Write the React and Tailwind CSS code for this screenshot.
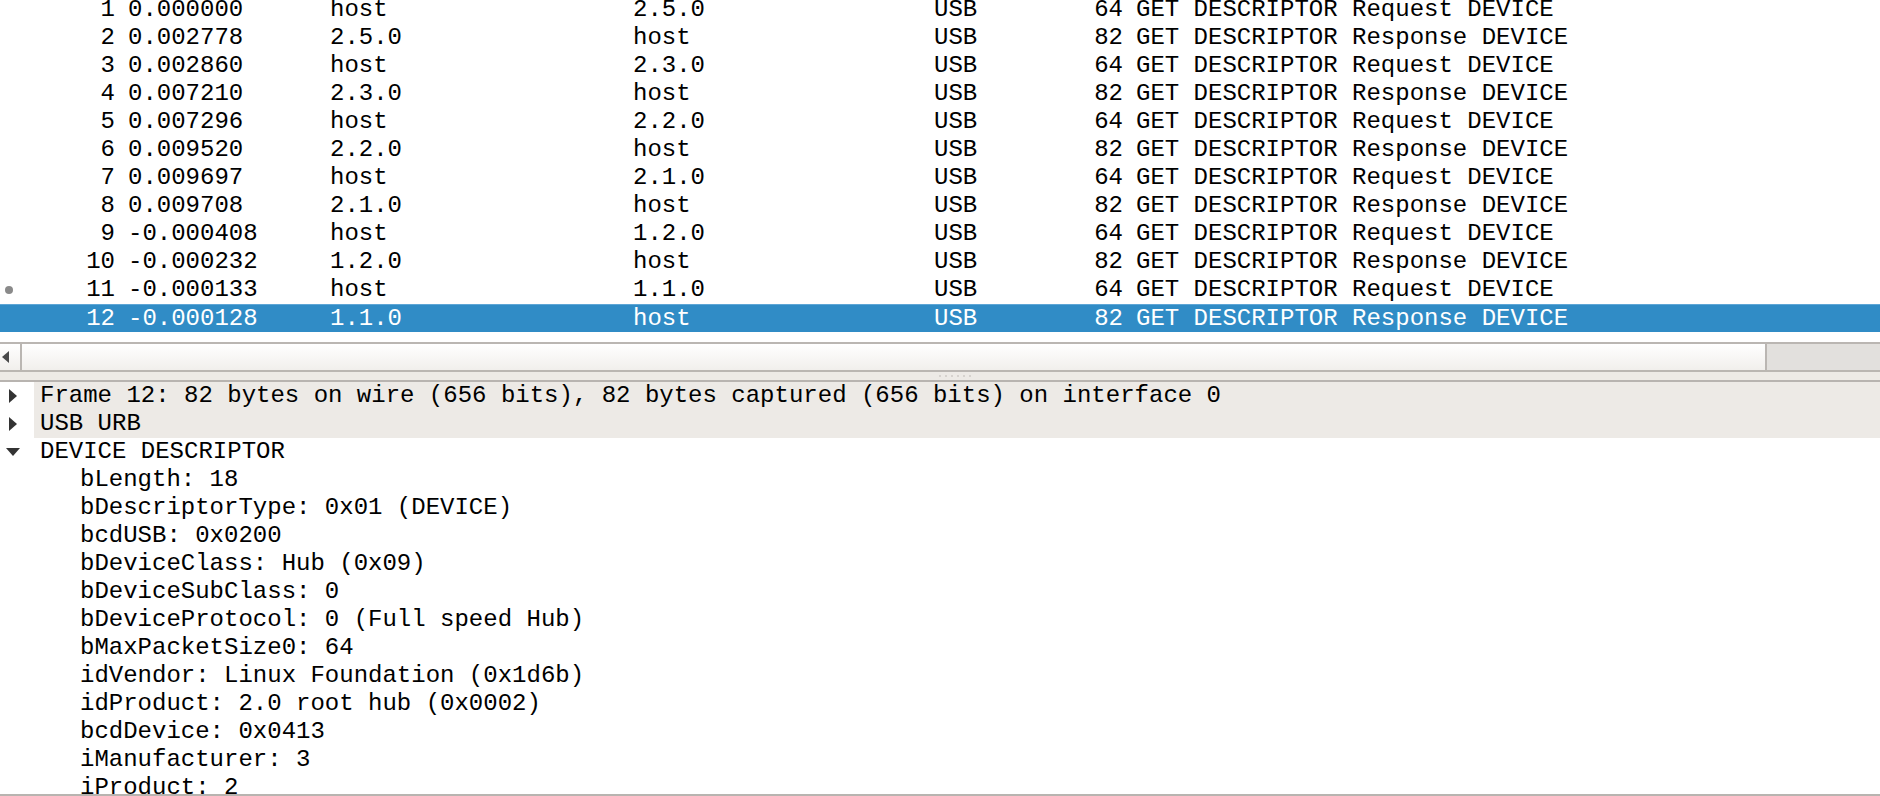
import React from 'react';

const packets = [
  [1, '0.000000', 'host', '2.5.0', 64, 'Request'],
  [2, '0.002778', '2.5.0', 'host', 82, 'Response'],
  [3, '0.002860', 'host', '2.3.0', 64, 'Request'],
  [4, '0.007210', '2.3.0', 'host', 82, 'Response'],
  [5, '0.007296', 'host', '2.2.0', 64, 'Request'],
  [6, '0.009520', '2.2.0', 'host', 82, 'Response'],
  [7, '0.009697', 'host', '2.1.0', 64, 'Request'],
  [8, '0.009708', '2.1.0', 'host', 82, 'Response'],
  [9, '-0.000408', 'host', '1.2.0', 64, 'Request'],
  [10, '-0.000232', '1.2.0', 'host', 82, 'Response'],
  [11, '-0.000133', 'host', '1.1.0', 64, 'Request'],
  [12, '-0.000128', '1.1.0', 'host', 82, 'Response'],
];

const fields = [
  'bLength: 18',
  'bDescriptorType: 0x01 (DEVICE)',
  'bcdUSB: 0x0200',
  'bDeviceClass: Hub (0x09)',
  'bDeviceSubClass: 0',
  'bDeviceProtocol: 0 (Full speed Hub)',
  'bMaxPacketSize0: 64',
  'idVendor: Linux Foundation (0x1d6b)',
  'idProduct: 2.0 root hub (0x0002)',
  'bcdDevice: 0x0413',
  'iManufacturer: 3',
  'iProduct: 2',
];

function PacketRow({ p, selected, related }) {
  const [no, time, src, dst, len, kind] = p;
  return (
    <div
      className={
        'grid grid-cols-[128px_202px_303px_301px_130px_72px_1fr] h-[28px] items-center whitespace-pre ' +
        (selected ? 'bg-[#308cc6] text-white border-t border-[#5ea6d6]' : 'text-black')
      }
    >
      <div className="flex items-center justify-between pl-[5px] pr-[13px]">
        {related ? <span className="w-[8px] h-[8px] rounded-full bg-[#8a8a8a]" /> : <span />}
        <span>{no}</span>
      </div>
      <div>{time}</div>
      <div>{src}</div>
      <div>{dst}</div>
      <div>USB</div>
      <div className="text-right pr-[13px]">{len}</div>
      <div>GET DESCRIPTOR {kind} DEVICE</div>
    </div>
  );
}

function Arrow({ open }) {
  return open ? (
    <svg width="14" height="8" viewBox="0 0 14 8" className="ml-[6px]">
      <path d="M0 0 L14 0 L7 8 Z" fill="#333" />
    </svg>
  ) : (
    <svg width="8" height="14" viewBox="0 0 8 14" className="ml-[9px]">
      <path d="M0 0 L8 7 L0 14 Z" fill="#333" />
    </svg>
  );
}

function TreeTop({ label, open, shaded }) {
  return (
    <div className="flex h-[28px] items-stretch">
      <div className="w-[34px] flex items-center bg-white">
        <Arrow open={open} />
      </div>
      <div className={'flex-1 flex items-center pl-[6px] whitespace-pre ' + (shaded ? 'bg-[#edeae6]' : '')}>
        {label}
      </div>
    </div>
  );
}

export default function App() {
  return (
    <div className="h-[796px] w-[1880px] overflow-hidden flex flex-col bg-white font-['Liberation_Mono',monospace] text-[24px] leading-[28px] text-black">
      {/* packet list */}
      <div className="h-[342px] overflow-hidden shrink-0">
        <div className="mt-[-4px]">
          {packets.map((p) => (
            <PacketRow key={p[0]} p={p} selected={p[0] === 12} related={p[0] === 11} />
          ))}
        </div>
      </div>

      {/* horizontal scrollbar */}
      <div className="h-[30px] shrink-0 flex border-y-2 border-[#bab6b2] bg-[#e2e0dd]">
        <div className="w-[22px] flex items-center border-r-2 border-[#bab6b2] bg-gradient-to-b from-white to-[#f1efec]">
          <svg width="7" height="12" viewBox="0 0 7 12" className="ml-[2px]">
            <path d="M7 0 L0 6 L7 12 Z" fill="#4a4a4a" />
          </svg>
        </div>
        <div className="w-[1745px] border-r-2 border-[#bab6b2] bg-gradient-to-b from-white to-[#f1efec]" />
        <div className="flex-1" />
      </div>

      {/* splitter */}
      <div className="h-[10px] shrink-0 bg-[#edeae6] border-b-2 border-[#b8b4b0] flex items-start justify-center pt-[3px]">
        <div className="flex gap-[4px] ml-[30px]">
          {[0, 1, 2, 3, 4, 5].map((i) => (
            <span key={i} className="w-[2px] h-[2px] bg-[#d6d2ce]" />
          ))}
        </div>
      </div>

      {/* packet details */}
      <div className="flex-1 overflow-hidden">
        <TreeTop
          label="Frame 12: 82 bytes on wire (656 bits), 82 bytes captured (656 bits) on interface 0"
          shaded
        />
        <TreeTop label="USB URB" shaded />
        <TreeTop label="DEVICE DESCRIPTOR" open />
        {fields.map((f) => (
          <div key={f} className="h-[28px] flex items-center pl-[80px] whitespace-pre">
            {f}
          </div>
        ))}
      </div>
      <div className="h-[2px] shrink-0 bg-[#b8b4b0]" />
    </div>
  );
}
